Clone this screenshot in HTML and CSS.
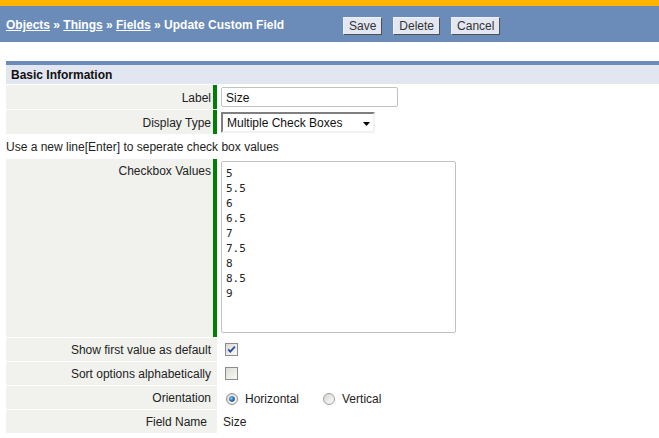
FILE: index.html
```html
<!DOCTYPE html>
<html>
<head>
<meta charset="utf-8">
<title>Update Custom Field</title>
<link rel="stylesheet" href="styles.css">
</head>
<body>
<div class="topbar">
  <div class="crumbs"><a href="#">Objects</a> » <a href="#">Things</a> » <a href="#">Fields</a> » Update Custom Field</div>
  <div class="actions">
    <button class="btn">Save</button>
    <button class="btn">Delete</button>
    <button class="btn">Cancel</button>
  </div>
</div>

<div class="section">
  <div class="sechead">Basic Information</div>
  <table class="form">
    <tr class="row-std">
      <td class="lbl req">Label</td>
      <td class="val"><input class="text" type="text" value="Size"></td>
    </tr>
    <tr class="row-std">
      <td class="lbl req">Display Type</td>
      <td class="val">
        <span class="selwrap">
          <select class="sel"><option>Multiple Check Boxes</option></select>
          <svg class="selarrow" width="7" height="4" viewBox="0 0 7 4"><path d="M0 0H7L3.5 4Z" fill="#000"/></svg>
        </span>
      </td>
    </tr>
    <tr class="row-note">
      <td class="note" colspan="2">Use a new line[Enter] to seperate check box values</td>
    </tr>
    <tr class="row-area">
      <td class="lbl req top">Checkbox Values</td>
      <td class="val top"><textarea class="area">5
5.5
6
6.5
7
7.5
8
8.5
9</textarea></td>
    </tr>
    <tr class="row-sm">
      <td class="lbl">Show first value as default</td>
      <td class="val">
        <svg class="cb" width="13" height="13" viewBox="0 0 13 13">
          <defs><linearGradient id="cbg1" x1="0" y1="0" x2="1" y2="1"><stop offset="0" stop-color="#d9d9d4"/><stop offset="1" stop-color="#fbfbf9"/></linearGradient></defs>
          <rect x="0.5" y="0.5" width="12" height="12" fill="url(#cbg1)" stroke="#8c8c8c"/>
          <path d="M3.2 6.3 L5.3 8.6 L9.9 3.6" fill="none" stroke="#2d4da3" stroke-width="1.8"/>
        </svg>
      </td>
    </tr>
    <tr class="row-sm">
      <td class="lbl">Sort options alphabetically</td>
      <td class="val">
        <svg class="cb" width="13" height="13" viewBox="0 0 13 13">
          <defs><linearGradient id="cbg2" x1="0" y1="0" x2="1" y2="1"><stop offset="0" stop-color="#d9d9d4"/><stop offset="1" stop-color="#fbfbf9"/></linearGradient></defs>
          <rect x="0.5" y="0.5" width="12" height="12" fill="url(#cbg2)" stroke="#8c8c8c"/>
        </svg>
      </td>
    </tr>
    <tr class="row-sm">
      <td class="lbl">Orientation</td>
      <td class="val">
        <div class="radios">
          <label class="radio">
            <svg width="12" height="12" viewBox="0 0 12 12">
              <defs>
                <linearGradient id="rg1" x1="0" y1="0" x2="1" y2="1"><stop offset="0" stop-color="#d6d6d2"/><stop offset="1" stop-color="#fcfcfb"/></linearGradient>
                <radialGradient id="rd1" cx="0.4" cy="0.4" r="0.6"><stop offset="0" stop-color="#8fd0f5"/><stop offset="0.6" stop-color="#2a78c0"/><stop offset="1" stop-color="#143f78"/></radialGradient>
              </defs>
              <circle cx="6" cy="6" r="5.5" fill="url(#rg1)" stroke="#8e8e8e"/>
              <circle cx="6" cy="6" r="2.8" fill="url(#rd1)"/>
            </svg>
            Horizontal
          </label>
          <label class="radio">
            <svg width="12" height="12" viewBox="0 0 12 12">
              <defs>
                <linearGradient id="rg2" x1="0" y1="0" x2="1" y2="1"><stop offset="0" stop-color="#d6d6d2"/><stop offset="1" stop-color="#fcfcfb"/></linearGradient>
              </defs>
              <circle cx="6" cy="6" r="5.5" fill="url(#rg2)" stroke="#a0a0a0"/>
            </svg>
            Vertical
          </label>
        </div>
      </td>
    </tr>
    <tr class="row-sm">
      <td class="lbl wide">Field Name</td>
      <td class="val"><span class="plain">Size</span></td>
    </tr>
  </table>
</div>
</body>
</html>
```

FILE: styles.css
```css
body {
  margin: 0;
  font-family: "Liberation Sans", Arial, sans-serif;
  font-size: 12px;
  color: #222;
  background: #fff;
}

.topbar {
  display: flex;
  align-items: center;
  height: 34px;
  padding-top: 2px;
  border-top: 6px solid #ffb400;
  background: #6b8bb9;
  padding-left: 6px;
}

.crumbs {
  width: 337px;
  color: #fff;
  font-weight: bold;
  white-space: nowrap;
}

.crumbs a {
  color: #fff;
  text-decoration: underline;
}

.actions {
  display: flex;
  gap: 11px;
  margin-top: 1px;
}

.btn {
  font-family: "Liberation Sans", Arial, sans-serif;
  font-size: 12px;
  line-height: 14px;
  color: #333;
  background: #e3e7f2;
  border: 1px solid;
  border-color: #eef0f7 #505050 #505050 #eef0f7;
  padding: 1px 5px;
  margin: 0;
}

.section {
  margin: 19px 0 0 6px;
}

.sechead {
  border-top: 4px solid #6b8bb9;
  background: #e1e6f0;
  height: 19px;
  line-height: 20px;
  padding-left: 5px;
  font-weight: bold;
  color: #111;
}

.form {
  width: 100%;
  border-collapse: separate;
  border-spacing: 0 1px;
}

.form td {
  padding: 0;
}

.row-std td { height: 24px; }
.row-note td { height: 23px; }
.row-area td { height: 178px; }
.row-sm td { height: 23px; }

.form td.lbl {
  width: 211px;
  box-sizing: border-box;
  background: #f1f2ee;
  border-right: 4px solid #f1f2ee;
  padding-right: 2px;
  padding-top: 1px;
  text-align: right;
  vertical-align: middle;
  white-space: nowrap;
}

.form td.lbl.req {
  border-right-color: #008000;
}

.form td.lbl.wide {
  padding-right: 6px;
}

.form td.val {
  padding-left: 4px;
  vertical-align: middle;
}

.form td.top {
  vertical-align: top;
}

.form td.lbl.top {
  padding-top: 5px;
}

.form td.note {
  vertical-align: middle;
}

.text {
  display: block;
  box-sizing: border-box;
  width: 177px;
  height: 20px;
  margin: 0;
  padding: 1px 4px 0;
  border: 1px solid #c2c2c2;
  border-radius: 2px;
  font-family: "Liberation Sans", Arial, sans-serif;
  font-size: 12px;
  color: #111;
}

.selwrap {
  position: relative;
  display: inline-block;
  vertical-align: middle;
}

.sel {
  display: block;
  appearance: none;
  -webkit-appearance: none;
  box-sizing: border-box;
  width: 154px;
  height: 21px;
  margin: 0;
  padding: 2px 0 0 4px;
  border: 2px solid;
  border-color: #7f7f7f #f2f2f2 #f2f2f2 #7f7f7f;
  border-radius: 0;
  background: #fff;
  font-family: "Liberation Sans", Arial, sans-serif;
  font-size: 12px;
  color: #111;
}

.selarrow {
  position: absolute;
  left: 142px;
  top: 10px;
}

.area {
  display: block;
  box-sizing: border-box;
  width: 235px;
  height: 172px;
  margin: 2px 0 0 0;
  padding: 4px 4px 3px;
  border: 1px solid #c2c2c2;
  border-radius: 2px;
  resize: none;
  font-family: "DejaVu Sans Mono", "Liberation Mono", monospace;
  font-size: 11px;
  line-height: 15px;
  color: #222;
  overflow: hidden;
}

.cb {
  display: block;
  margin-left: 4px;
}

.radios {
  display: flex;
  align-items: center;
  gap: 24px;
  margin-top: 3px;
}

.radio {
  display: flex;
  align-items: center;
  gap: 7px;
}

.radio:first-child {
  margin-left: 5px;
}

.radio svg {
  display: block;
}

.plain {
  margin-left: 2px;
}
```
